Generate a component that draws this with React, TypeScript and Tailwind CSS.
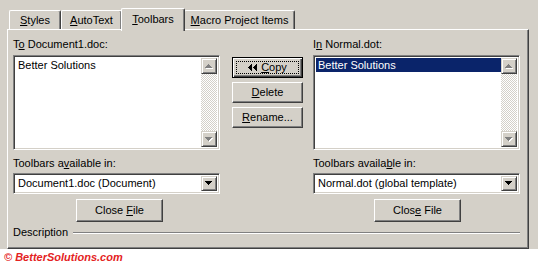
import React from "react";

const raised =
  "border border-t-white border-l-white border-r-[#404040] border-b-[#404040] shadow-[inset_-1px_-1px_0_#808080]";
const raisedSmall =
  "border border-t-[#d4d0c8] border-l-[#d4d0c8] border-r-[#404040] border-b-[#404040] shadow-[inset_1px_1px_0_#ffffff,inset_-1px_-1px_0_#808080]";
const sunken =
  "border border-t-[#808080] border-l-[#808080] border-r-white border-b-white shadow-[inset_1px_1px_0_#404040,inset_-1px_-1px_0_#d4d0c8]";

function U({ children }: { children: React.ReactNode }) {
  return <span className="underline decoration-1 underline-offset-[1px]">{children}</span>;
}

function Arrow({ dir, disabled }: { dir: "up" | "down"; disabled?: boolean }) {
  const rows = [
    [3, 1],
    [2, 3],
    [1, 5],
    [0, 7],
  ];
  const ordered = dir === "up" ? rows : [...rows].reverse();
  const fill = disabled ? "#808080" : "#000000";
  return (
    <svg width="8" height="5" viewBox="0 0 8 5" shapeRendering="crispEdges">
      {disabled &&
        ordered.map(([x, w], i) => (
          <rect key={"s" + i} x={x + 1} y={i + 1} width={w} height={1} fill="#ffffff" />
        ))}
      {ordered.map(([x, w], i) => (
        <rect key={i} x={x} y={i} width={w} height={1} fill={fill} />
      ))}
    </svg>
  );
}

function ScrollBtn({ dir }: { dir: "up" | "down" }) {
  return (
    <div className={`w-[16px] h-[16px] bg-[#d4d0c8] flex items-center justify-center ${raisedSmall}`}>
      <Arrow dir={dir} disabled />
    </div>
  );
}

function ListBox({ selected }: { selected?: boolean }) {
  return (
    <div className={`w-[207px] h-[95px] bg-white flex p-[2px] ${sunken}`}>
      <div className="flex-1">
        <div
          className={`h-[14px] pl-[2px] leading-[14px] ${
            selected ? "bg-[#0a246a] text-white" : "text-black"
          }`}
        >
          Better Solutions
        </div>
      </div>
      <div className="w-[16px] flex flex-col">
        <ScrollBtn dir="up" />
        <div className="flex-1 [background:repeating-conic-gradient(#d4d0c8_0_25%,#ffffff_0_50%)_0_0/2px_2px]" />
        <ScrollBtn dir="down" />
      </div>
    </div>
  );
}

function Combo({ text }: { text: string }) {
  return (
    <div className={`w-[207px] h-[21px] bg-white flex items-stretch p-[2px] ${sunken}`}>
      <div className="flex-1 pl-[2px] flex items-center">{text}</div>
      <div className={`w-[16px] bg-[#d4d0c8] flex items-center justify-center ${raisedSmall}`}>
        <Arrow dir="down" />
      </div>
    </div>
  );
}

function Button({
  children,
  className = "",
}: {
  children: React.ReactNode;
  className?: string;
}) {
  return (
    <div className={`bg-[#d4d0c8] flex items-center justify-center ${raised} ${className}`}>
      <span>{children}</span>
    </div>
  );
}

function Tab({
  w,
  active,
  children,
}: {
  w: string;
  active?: boolean;
  children: React.ReactNode;
}) {
  if (active) {
    return (
      <div
        className={`${w} relative z-10 h-[23px] -mb-[2px] -mx-[1px] bg-[#d4d0c8] rounded-t-[2px] border-l border-t border-r border-l-white border-t-white border-r-[#404040] shadow-[inset_-1px_0_0_#808080] pt-[4px] text-center`}
      >
        {children}
      </div>
    );
  }
  return (
    <div
      className={`${w} h-[19px] bg-[#d4d0c8] rounded-t-[2px] border-l border-t border-r border-l-white border-t-white border-r-[#404040] shadow-[inset_-1px_0_0_#808080] pt-[3px] text-center`}
    >
      {children}
    </div>
  );
}

export default function App() {
  return (
    <div className="w-[538px] h-[264px] bg-white flex flex-col font-['Liberation_Sans',Arial,sans-serif] text-[11px] leading-[13px] text-black">
      <div className="h-[249px] bg-[#d4d0c8] pt-[8px] pl-[7px] pr-[9px] flex flex-col">
        <div className="h-[21px] flex items-end pl-[2px]">
          <Tab w="w-[52px]">
            <U>S</U>tyles
          </Tab>
          <Tab w="w-[61px]">
            <U>A</U>utoText
          </Tab>
          <Tab w="w-[64px]" active>
            <U>T</U>oolbars
          </Tab>
          <Tab w="w-[111px]">
            <U>M</U>acro Project Items
          </Tab>
        </div>
        <div className="flex-1 border border-l-white border-t-white border-r-[#404040] border-b-[#404040] shadow-[inset_-1px_-1px_0_#808080] pl-[5px] pt-[8px] flex flex-col">
          <div className="flex w-[507px]">
            <div className="w-[207px] flex flex-col">
              <div className="h-[13px]">
                T<U>o</U> Document1.doc:
              </div>
              <div className="mt-[4px]">
                <ListBox />
              </div>
              <div className="mt-[7px] h-[13px]">
                Toolbars a<U>v</U>ailable in:
              </div>
              <div className="mt-[3px]">
                <Combo text="Document1.doc (Document)" />
              </div>
              <Button className="mt-[5px] ml-[63px] w-[87px] h-[23px]">
                Close <U>F</U>ile
              </Button>
            </div>
            <div className="ml-[12px] w-[71px] pt-[19px] flex flex-col gap-[4px]">
              <div className="relative h-[21px] bg-[#d4d0c8] border border-black shadow-[inset_1px_1px_0_#ffffff,inset_-1px_-1px_0_#404040,inset_-2px_-2px_0_#808080] flex items-center justify-center gap-[4px]">
                <div className="absolute inset-[3px] border border-dotted border-black" />
                <svg width="9" height="7" viewBox="0 0 9 7" shapeRendering="crispEdges">
                  <rect x="0" y="3" width="1" height="1" fill="#000" />
                  <rect x="1" y="2" width="1" height="3" fill="#000" />
                  <rect x="2" y="1" width="1" height="5" fill="#000" />
                  <rect x="3" y="0" width="1" height="7" fill="#000" />
                  <rect x="5" y="3" width="1" height="1" fill="#000" />
                  <rect x="6" y="2" width="1" height="3" fill="#000" />
                  <rect x="7" y="1" width="1" height="5" fill="#000" />
                  <rect x="8" y="0" width="1" height="7" fill="#000" />
                </svg>
                <span>
                  <U>C</U>opy
                </span>
              </div>
              <Button className="h-[21px]">
                <U>D</U>elete
              </Button>
              <Button className="h-[21px]">
                <U>R</U>ename...
              </Button>
            </div>
            <div className="ml-[10px] w-[207px] flex flex-col">
              <div className="h-[13px]">
                I<U>n</U> Normal.dot:
              </div>
              <div className="mt-[4px]">
                <ListBox selected />
              </div>
              <div className="mt-[7px] h-[13px]">
                Toolbars availa<U>b</U>le in:
              </div>
              <div className="mt-[3px]">
                <Combo text="Normal.dot (global template)" />
              </div>
              <Button className="mt-[5px] ml-[61px] w-[87px] h-[23px]">
                Clos<U>e</U> File
              </Button>
            </div>
          </div>
          <div className="mt-[4px] w-[507px] flex items-center">
            <span>Description</span>
            <div className="ml-[5px] flex-1 h-[2px] border-t border-b border-t-[#808080] border-b-white" />
          </div>
        </div>
      </div>
      <div className="pl-[4px] pt-[2px] text-[#e42222] italic font-bold">© BetterSolutions.com</div>
    </div>
  );
}
